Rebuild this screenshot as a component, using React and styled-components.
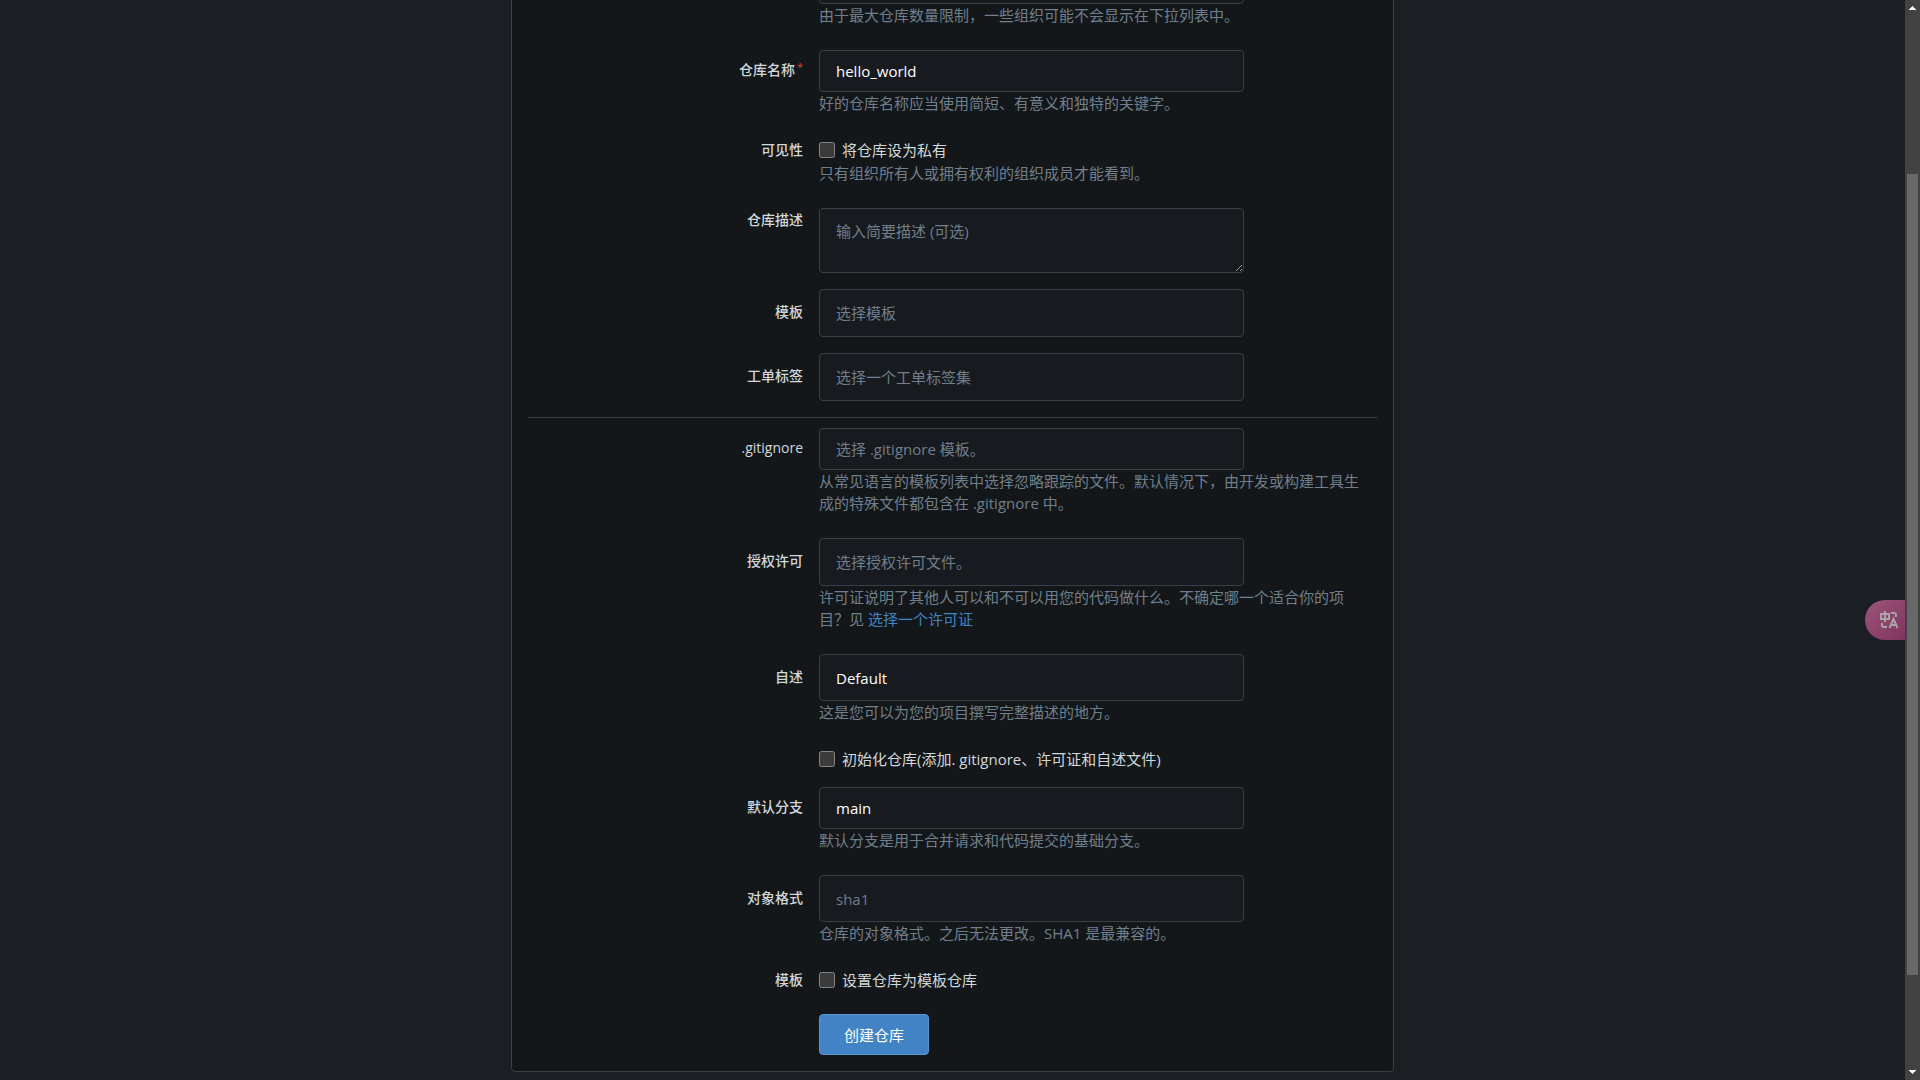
import React from 'react';
import styled, { createGlobalStyle } from 'styled-components';

const GlobalStyle = createGlobalStyle`
  * {
    box-sizing: border-box;
  }

  body {
    margin: 0;
    color-scheme: dark;
    background: #1b1f23;
    color: #d2d7dc;
    font-family: "Open Sans", "Noto Sans CJK SC", sans-serif;
    font-size: 15px;
    line-height: 22px;
  }

  input, select, textarea, button {
    font: inherit;
  }
`;

const Page = styled.div`
  display: flex;
  height: 100vh;
  overflow: hidden;
`;

// 页面已滚动到底部
const Main = styled.main`
  display: flex;
  flex: 1;
  flex-direction: column;
  justify-content: flex-end;
  align-items: center;
  padding-bottom: 8px;
`;

const Panel = styled.form`
  width: 100%;
  max-width: 883px;
  padding: 16px;
  border: 1px solid #3b4047;
  border-radius: 4px;
  background: #131719;
`;

const labelHeights = {
  text: '40px',
  select: '46px',
  line: '24px',
};

const Row = styled.div`
  display: grid;
  grid-template-columns: 275px 1fr;
  column-gap: 16px;
  align-items: start;
  margin-bottom: 16px;
`;

const Label = styled.label`
  display: flex;
  justify-content: flex-end;
  align-items: center;
  height: ${props => labelHeights[props.$kind]};
  font-size: 14px;
  font-weight: ${props => props.$plain ? 400 : 500};
`;

const Required = styled.span`
  align-self: flex-start;
  margin: 6px 0 0 2px;
  color: #cc4848;
  font-size: 11px;
`;

const Field = styled.div`
  grid-column: 2;
`;

const control = `
  display: block;
  width: 100%;
  max-width: 425px;
  margin: 0;
  padding: 0 16px;
  border: 1px solid #3b4047;
  border-radius: 4px;
  outline: 0;
  background: #171a1e;

  &::placeholder {
    color: #717f8c;
    opacity: 1;
  }
`;

const TextInput = styled.input`
  ${control};
  height: 42px;
  color: #fff;
`;

const TextArea = styled.textarea`
  ${control};
  height: 65px;
  padding: 11px 16px;
  color: #fff;
  resize: vertical;
`;

const Select = styled.select`
  ${control};
  height: ${props => props.$search ? '48px' : '47px'};
  color: ${props => props.$muted ? '#717f8c' : '#fff'};
  appearance: none;
  opacity: 1;
`;

const Help = styled.p`
  margin: 0 0 24px;
  padding-right: 12px;
  color: #717f8c;

  ${Row} & {
    margin-bottom: 8px;
  }
`;

const Link = styled.a`
  display: inline-block;
  color: #4183c4;
  text-decoration: none;
  vertical-align: top;
`;

const CheckLabel = styled.label`
  display: flex;
  align-items: center;
  gap: 7px;
  height: 24px;
`;

const Checkbox = styled.input`
  width: 16px;
  height: 16px;
  margin: 0;
`;

const Divider = styled.hr`
  height: 1px;
  margin: 0 0 10px;
  border: 0;
  background: #3b4047;
`;

const Actions = styled(Row)`
  margin: 22px 0 0;
`;

const SubmitButton = styled.button`
  height: 41px;
  padding: 0 24px;
  border: 1px solid #5a94cf;
  border-radius: 4px;
  background: #4183c4;
  color: #fff;
`;

const Scrollbar = styled.div`
  display: flex;
  flex-direction: column;
  align-items: center;
  width: 15px;
  padding: 6px 0;
  background: #424242;

  svg {
    display: block;
    flex: none;
  }
`;

const Track = styled.div`
  display: flex;
  flex: 1;
  flex-direction: column;
  width: 11px;
`;

const Space = styled.div`
  flex: ${props => props.$grow};
`;

const Thumb = styled.div`
  flex: 801;
  background: #686868;
`;

// 浮在页面右侧的翻译按钮
const TranslateButton = styled.button`
  position: fixed;
  top: 600px;
  right: 15px;
  display: flex;
  align-items: center;
  width: 40px;
  height: 40px;
  padding: 0 0 0 14px;
  border: 0;
  border-radius: 20px 0 0 20px;
  background: linear-gradient(135deg, #9c5679, #80335f);
  color: #aaa3a8;
`;

const CheckRow = ({ label, id, children, help }) => (
  <Row>
    {label && <Label $kind='line' htmlFor={id}>{label}</Label>}
    <Field>
      <CheckLabel>
        <Checkbox type='checkbox' id={id}/>
        {children}
      </CheckLabel>
      {help && <Help>{help}</Help>}
    </Field>
  </Row>
);

const SelectRow = ({ label, id, value, help, search, muted }) => (
  <Row>
    <Label $kind='select' htmlFor={id}>{label}</Label>
    <Field>
      <Select id={id} $search={search} $muted={muted}>
        <option>{value}</option>
      </Select>
      {help && <Help>{help}</Help>}
    </Field>
  </Row>
);

const App = () => (
  <Page>
    <GlobalStyle/>
    <Main>
      <Panel onSubmit={e => e.preventDefault()}>
        <Row>
          <Field>
            <Select id='owner' aria-describedby='owner_help'/>
            <Help id='owner_help'>由于最大仓库数量限制，一些组织可能不会显示在下拉列表中。</Help>
          </Field>
        </Row>
        <Row>
          <Label $kind='text' htmlFor='repo_name'>仓库名称<Required>*</Required></Label>
          <Field>
            <TextInput id='repo_name' defaultValue='hello_world'/>
            <Help>好的仓库名称应当使用简短、有意义和独特的关键字。</Help>
          </Field>
        </Row>
        <CheckRow label='可见性' id='private' help='只有组织所有人或拥有权利的组织成员才能看到。'>
          将仓库设为私有
        </CheckRow>
        <Row>
          <Label $kind='line' htmlFor='description'>仓库描述</Label>
          <Field>
            <TextArea id='description' placeholder='输入简要描述 (可选)'/>
          </Field>
        </Row>
        <SelectRow label='模板' id='repo_template' value='选择模板' search muted/>
        <SelectRow label='工单标签' id='issue_labels' value='选择一个工单标签集' search muted/>

        <Divider/>

        <Row>
          <Label $kind='text' $plain htmlFor='gitignores'>.gitignore</Label>
          <Field>
            <TextInput id='gitignores' placeholder='选择 .gitignore 模板。'/>
            <Help>从常见语言的模板列表中选择忽略跟踪的文件。默认情况下，由开发或构建工具生成的特殊文件都包含在 .gitignore 中。</Help>
          </Field>
        </Row>
        <SelectRow
          label='授权许可'
          id='license'
          value='选择授权许可文件。'
          search
          muted
          help={<>许可证说明了其他人可以和不可以用您的代码做什么。不确定哪一个适合你的项目？见 <Link href='#license'>选择一个许可证</Link></>}
        />
        <SelectRow label='自述' id='readme' value='Default' help='这是您可以为您的项目撰写完整描述的地方。'/>
        <CheckRow id='auto_init'>初始化仓库(添加. gitignore、许可证和自述文件)</CheckRow>
        <Row>
          <Label $kind='text' htmlFor='default_branch'>默认分支</Label>
          <Field>
            <TextInput id='default_branch' defaultValue='main'/>
            <Help>默认分支是用于合并请求和代码提交的基础分支。</Help>
          </Field>
        </Row>
        <SelectRow label='对象格式' id='object_format' value='sha1' muted help='仓库的对象格式。之后无法更改。SHA1 是最兼容的。'/>
        <CheckRow label='模板' id='is_template'>设置仓库为模板仓库</CheckRow>

        <Actions>
          <Field>
            <SubmitButton>创建仓库</SubmitButton>
          </Field>
        </Actions>
      </Panel>
    </Main>

    <TranslateButton type='button'>
      <svg width='20' height='20' viewBox='0 0 20 20' fill='none' stroke='currentColor' strokeWidth='2'>
        <path d='M2 4h8v5H2zM6 1v11'/>
        <path d='M12 3h3q2 0 2 2v2'/>
        <path d='M3 13v2q0 2 2 2h3'/>
        <path d='M10.500 18L14.500 9L18.500 18M12 15h5'/>
      </svg>
    </TranslateButton>

    <Scrollbar>
      <svg width='7' height='4' viewBox='0 0 7 4' fill='#fff' shapeRendering='crispEdges'>
        <path d='M3 0h1v1h1v1h1v1h1v1H0V3h1V2h1V1h1z'/>
      </svg>
      <Track>
        <Space $grow={164}/>
        <Thumb/>
        <Space $grow={95}/>
      </Track>
      <svg width='7' height='4' viewBox='0 0 7 4' fill='#fff' shapeRendering='crispEdges'>
        <path d='M0 0h7v1H6v1H5v1H4v1H3V3H2V2H1V1H0z'/>
      </svg>
    </Scrollbar>
  </Page>
);

export default App;
